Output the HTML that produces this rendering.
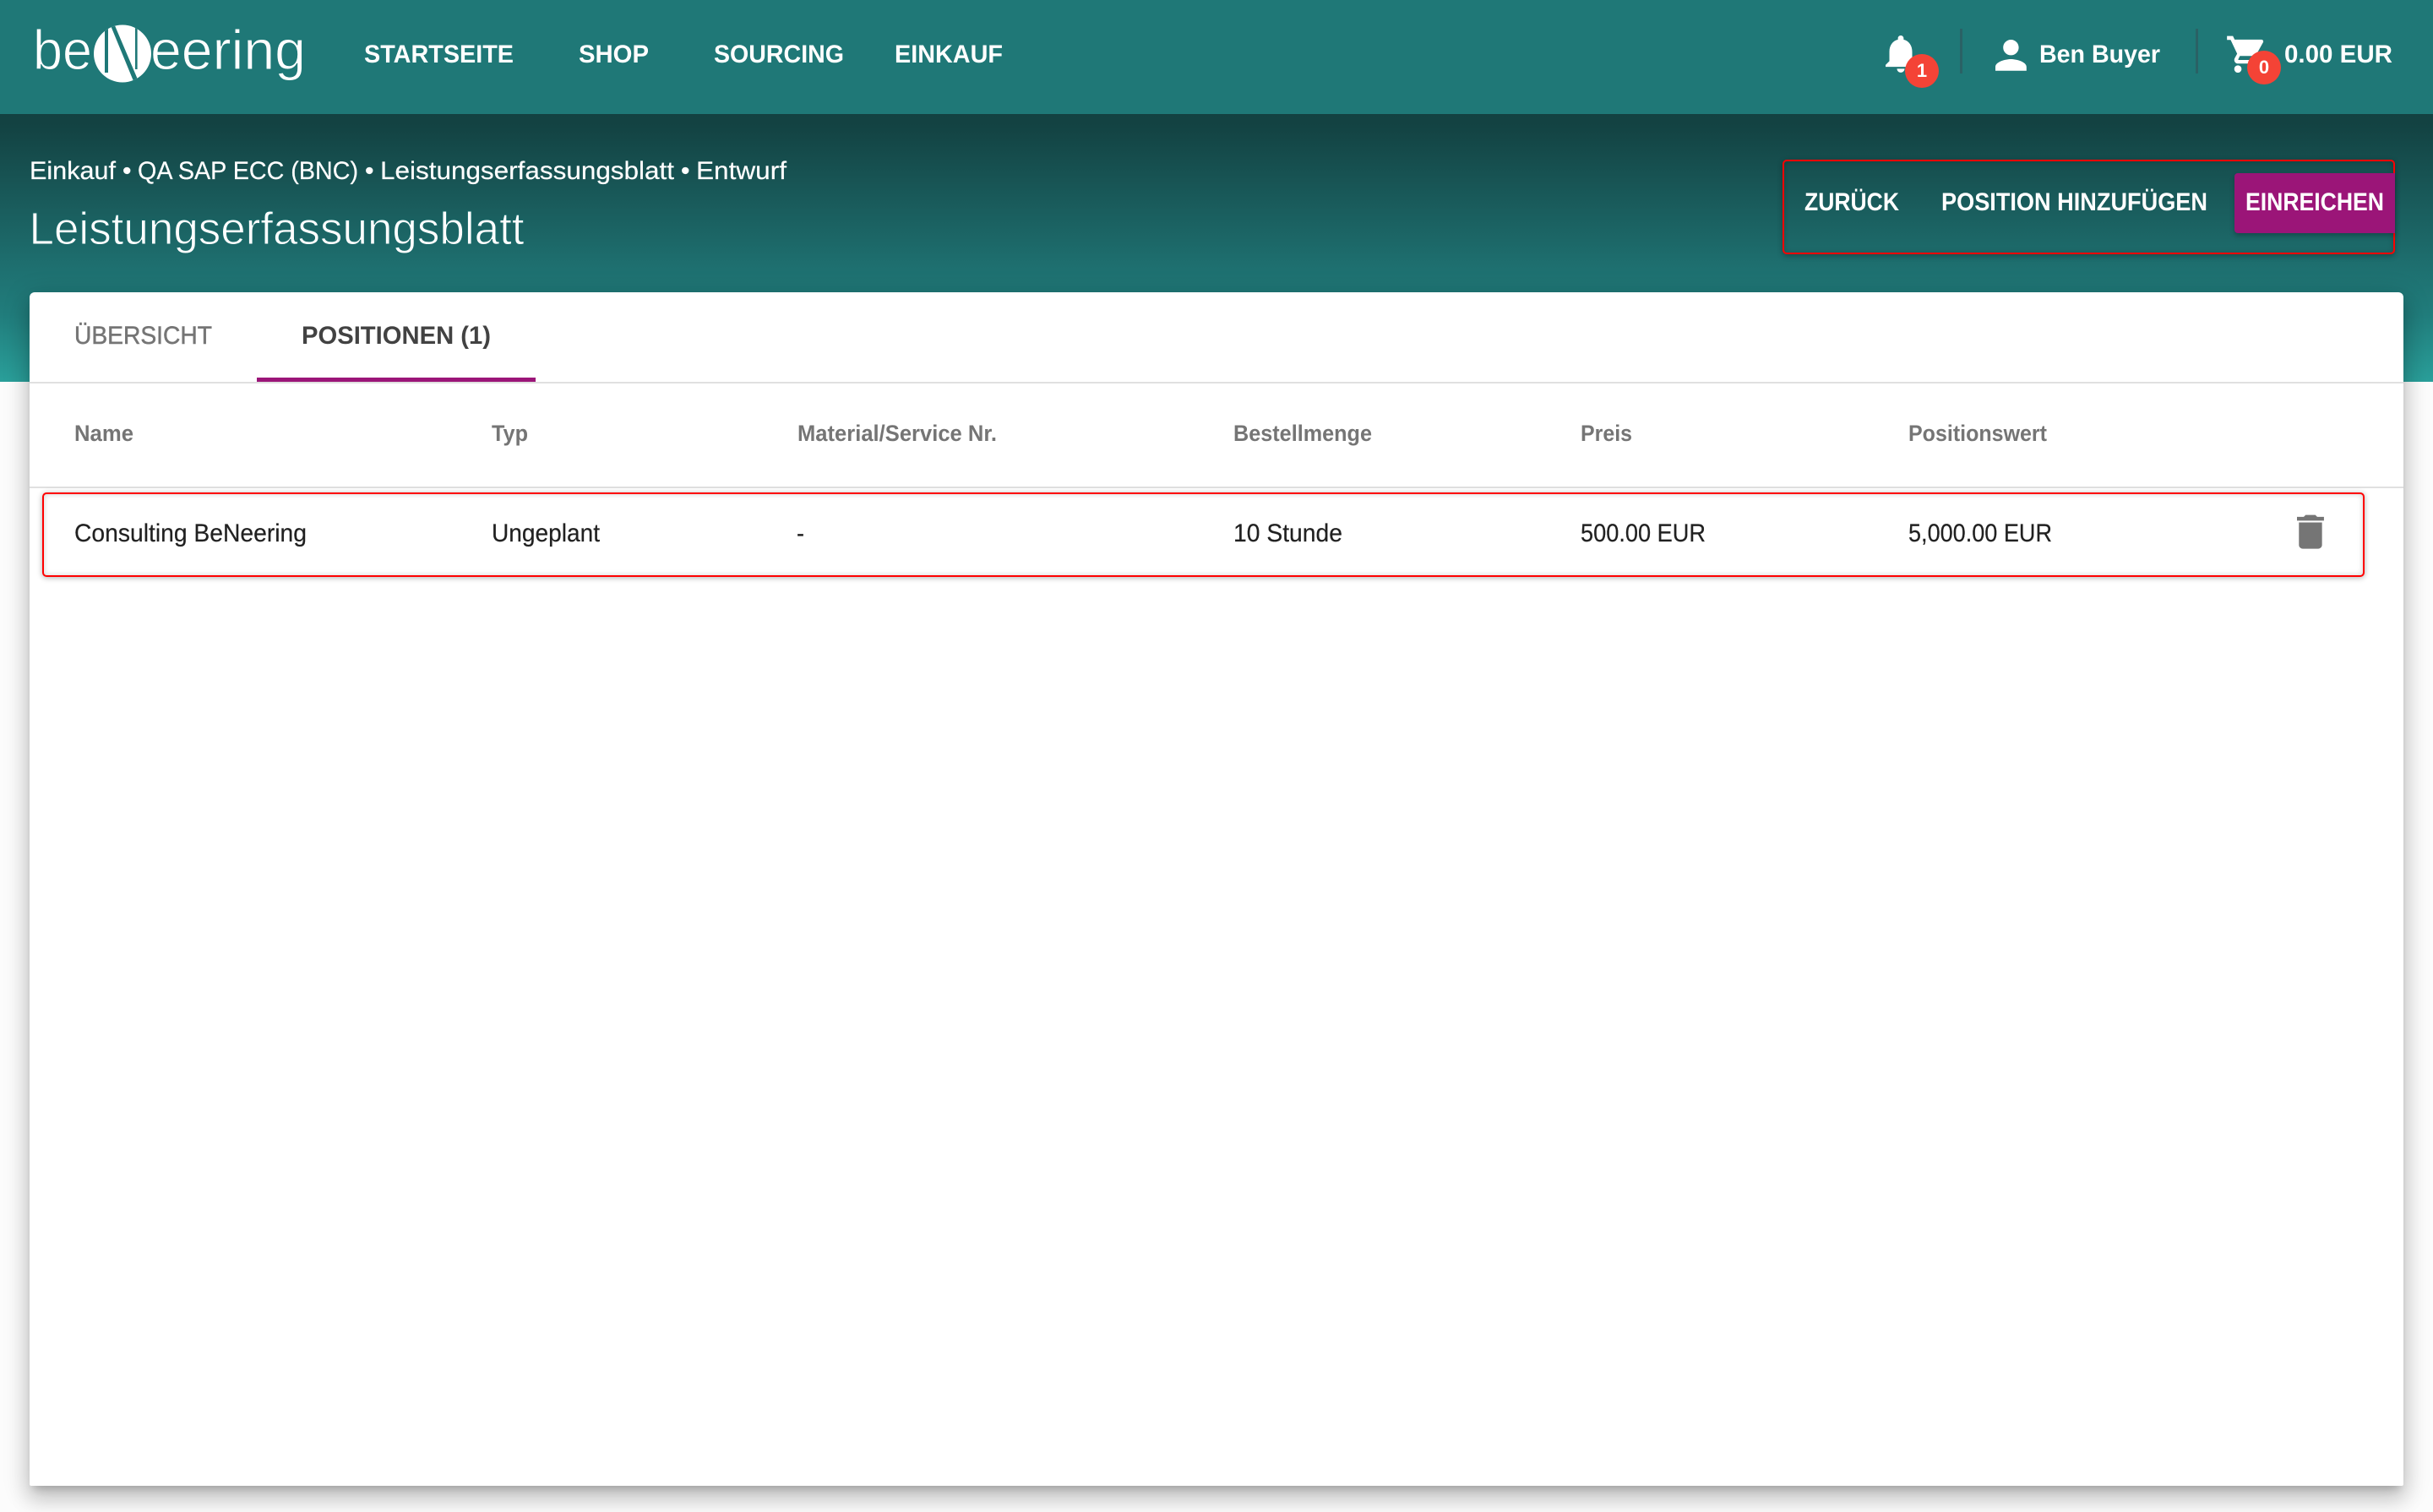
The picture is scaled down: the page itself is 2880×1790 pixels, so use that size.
<!DOCTYPE html>
<html lang="de">
<head>
<meta charset="utf-8">
<title>Leistungserfassungsblatt</title>
<style>
html,body{margin:0;padding:0;width:2880px;height:1790px;overflow:hidden;background:#fcfcfc}
body{position:relative;font-family:"Liberation Sans",sans-serif}
.abs{position:absolute}
#nav{left:0;top:0;width:2880px;height:135px;background:#1f7877}
#hero{left:0;top:135px;width:2880px;height:317px;background:linear-gradient(180deg,#134141 0%,#134343 5%,#185656 27%,#1e7070 58%,#217d7c 75%,#2a9f9a 100%)}
#card{left:35px;top:346px;width:2810px;height:1413px;background:#fff;border-radius:6px 6px 2px 2px;box-shadow:0 8px 10px -5px rgba(0,0,0,.2),0 16px 24px 2px rgba(0,0,0,.14),0 6px 30px 5px rgba(0,0,0,.12)}
#tabline{left:35px;top:452px;width:2810px;height:2px;background:#e0e0e0}
#tabsel{left:304px;top:447px;width:330px;height:5px;background:#9b1578}
#headline{left:35px;top:576px;width:2810px;height:2px;background:#e0e0e0}
#rowbox{left:50px;top:583px;width:2745px;height:96px;border:2px solid #f00;border-radius:5px;box-shadow:0 1px 7px rgba(0,0,0,.32),inset 0 0 7px rgba(0,0,0,.18)}
#btnbox{left:2110px;top:189px;width:721px;height:108px;border:2px solid #f00;border-radius:5px;box-shadow:0 2px 7px rgba(0,0,0,.3),inset 0 0 7px rgba(0,0,0,.18)}
#submit{left:2645px;top:205px;width:190px;height:71px;background:#9b1578;border-radius:4px 0 0 4px;box-shadow:0 3px 6px rgba(0,0,0,.25)}
svg{position:absolute;left:0;top:0}
text{font-family:"Liberation Sans",sans-serif}
.w{fill:#fff}
.m{font-weight:bold}
.nav{font-size:30px}
.crumb{font-size:30px;fill:#fff;stroke:#fff;stroke-width:.2px}
.thead{font-size:27px;fill:#757575;font-weight:bold}
.cell{font-size:30px;fill:#212121;stroke:#212121;stroke-width:.2px}
</style>
</head>
<body>
<div class="abs" id="nav"></div>
<div class="abs" id="hero"></div>
<div class="abs" id="card"></div>
<div class="abs" id="tabline"></div>
<div class="abs" id="tabsel"></div>
<div class="abs" id="headline"></div>
<div class="abs" id="rowbox"></div>
<div class="abs" id="btnbox"></div>
<div class="abs" id="submit"></div>

<svg width="2880" height="1790" viewBox="0 0 2880 1790" xmlns="http://www.w3.org/2000/svg">
  <defs>
    <clipPath id="nclip"><circle cx="145" cy="63.5" r="34"/></clipPath>
  </defs>

  <!-- Logo -->
  <text x="39" y="82" font-size="66" fill="#fff" stroke="#1f7877" stroke-width="1" textLength="70" lengthAdjust="spacingAndGlyphs">be</text>
  <circle cx="145" cy="63.5" r="34" fill="#fff"/>
  <g clip-path="url(#nclip)" fill="#1f7877">
    <rect x="124" y="28" width="4" height="58"/>
    <polygon points="130,28 135,28 163,94 158,96"/>
    <rect x="160" y="30" width="2.6" height="52"/>
  </g>
  <text x="178" y="82" font-size="66" fill="#fff" stroke="#1f7877" stroke-width="1" textLength="184" lengthAdjust="spacingAndGlyphs">eering</text>

  <!-- Nav -->
  <text class="w m nav" x="431" y="74" textLength="177" lengthAdjust="spacingAndGlyphs">STARTSEITE</text>
  <text class="w m nav" x="685" y="74" textLength="83" lengthAdjust="spacingAndGlyphs">SHOP</text>
  <text class="w m nav" x="845" y="74" textLength="154" lengthAdjust="spacingAndGlyphs">SOURCING</text>
  <text class="w m nav" x="1059" y="74" textLength="128" lengthAdjust="spacingAndGlyphs">EINKAUF</text>

  <!-- Bell -->
  <path transform="translate(2223 36.4) scale(2.25)" fill="#fff" d="M12 22c1.1 0 2-.9 2-2h-4c0 1.1.89 2 2 2zm6-6v-5c0-3.07-1.64-5.64-4.5-6.32V4c0-.83-.67-1.5-1.5-1.5s-1.5.67-1.5 1.5v.68C7.63 5.36 6 7.92 6 11v5l-2 2v1h16v-1l-2-2z"/>
  <circle cx="2275" cy="84" r="20" fill="#f44336"/>
  <text x="2275" y="91" font-size="22" fill="#fff" font-weight="bold" text-anchor="middle">1</text>
  <rect x="2320" y="34" width="3" height="53" fill="#2a6165"/>

  <!-- User -->
  <path transform="translate(2352.8 37.8) scale(2.3)" fill="#fff" d="M12 12c2.21 0 4-1.79 4-4s-1.79-4-4-4-4 1.79-4 4 1.79 4 4 4zm0 2c-2.67 0-8 1.34-8 4v2h16v-2c0-2.66-5.33-4-8-4z"/>
  <text class="w m nav" x="2414" y="74" textLength="143" lengthAdjust="spacingAndGlyphs">Ben Buyer</text>
  <rect x="2599" y="34" width="3" height="53" fill="#2a6165"/>

  <!-- Cart -->
  <path transform="translate(2634 38.7) scale(2.15)" fill="#fff" d="M7 18c-1.1 0-1.99.9-1.99 2S5.9 22 7 22s2-.9 2-2-.9-2-2-2zM1 2v2h2l3.6 7.59-1.35 2.45c-.16.28-.25.61-.25.96 0 1.1.9 2 2 2h12v-2H7.42c-.14 0-.25-.11-.25-.25l.03-.12.9-1.83h7.45c.75 0 1.41-.41 1.75-1.03l3.58-6.47c.08-.14.12-.31.12-.48 0-.55-.45-1-1-1H5.21l-.94-2H1zm16 16c-1.1 0-1.99.9-1.99 2s.89 2 2 2 2-.9 2-2-.9-2-2-2z"/>
  <circle cx="2680" cy="80" r="20" fill="#f44336"/>
  <text x="2680" y="87" font-size="22" fill="#fff" font-weight="bold" text-anchor="middle">0</text>
  <text class="w m nav" x="2704" y="74" textLength="128" lengthAdjust="spacingAndGlyphs">0.00 EUR</text>

  <!-- Hero breadcrumb -->
  <text class="crumb" x="35" y="212" textLength="102" lengthAdjust="spacingAndGlyphs">Einkauf</text>
  <text class="crumb" x="145" y="212">•</text>
  <text class="crumb" x="163" y="212" textLength="261" lengthAdjust="spacingAndGlyphs">QA SAP ECC (BNC)</text>
  <text class="crumb" x="432" y="212">•</text>
  <text class="crumb" x="450" y="212" textLength="348" lengthAdjust="spacingAndGlyphs">Leistungserfassungsblatt</text>
  <text class="crumb" x="806" y="212">•</text>
  <text class="crumb" x="824" y="212" textLength="107" lengthAdjust="spacingAndGlyphs">Entwurf</text>

  <text class="w" x="34.5" y="289" font-size="54" stroke="#1c6a6a" stroke-width="1" textLength="586" lengthAdjust="spacingAndGlyphs">Leistungserfassungsblatt</text>

  <!-- Action buttons -->
  <text class="w m nav" x="2136" y="249" textLength="112" lengthAdjust="spacingAndGlyphs">ZURÜCK</text>
  <text class="w m nav" x="2298" y="249" textLength="315" lengthAdjust="spacingAndGlyphs">POSITION HINZUFÜGEN</text>
  <text class="w m nav" x="2658" y="249" textLength="164" lengthAdjust="spacingAndGlyphs">EINREICHEN</text>

  <!-- Tabs -->
  <text x="88" y="407" font-size="30" fill="#757575" stroke="#757575" stroke-width=".5" textLength="163" lengthAdjust="spacingAndGlyphs">ÜBERSICHT</text>
  <text x="357" y="407" font-size="30" fill="#424242" font-weight="bold" textLength="224" lengthAdjust="spacingAndGlyphs">POSITIONEN (1)</text>

  <!-- Table head -->
  <text class="thead" x="88" y="522" textLength="70" lengthAdjust="spacingAndGlyphs">Name</text>
  <text class="thead" x="582" y="522" textLength="43" lengthAdjust="spacingAndGlyphs">Typ</text>
  <text class="thead" x="944" y="522" textLength="236" lengthAdjust="spacingAndGlyphs">Material/Service Nr.</text>
  <text class="thead" x="1460" y="522" textLength="164" lengthAdjust="spacingAndGlyphs">Bestellmenge</text>
  <text class="thead" x="1871" y="522" textLength="61" lengthAdjust="spacingAndGlyphs">Preis</text>
  <text class="thead" x="2259" y="522" textLength="164" lengthAdjust="spacingAndGlyphs">Positionswert</text>

  <!-- Row -->
  <text class="cell" x="88" y="641" textLength="275" lengthAdjust="spacingAndGlyphs">Consulting BeNeering</text>
  <text class="cell" x="582" y="641" textLength="128" lengthAdjust="spacingAndGlyphs">Ungeplant</text>
  <text class="cell" x="943" y="641" textLength="9" lengthAdjust="spacingAndGlyphs">-</text>
  <text class="cell" x="1460" y="641" textLength="129" lengthAdjust="spacingAndGlyphs">10 Stunde</text>
  <text class="cell" x="1871" y="641" textLength="148" lengthAdjust="spacingAndGlyphs">500.00 EUR</text>
  <text class="cell" x="2259" y="641" textLength="170" lengthAdjust="spacingAndGlyphs">5,000.00 EUR</text>

  <!-- Trash -->
  <path transform="translate(2707.6 603) scale(2.28 2.22)" fill="#757575" d="M6 19c0 1.1.9 2 2 2h8c1.1 0 2-.9 2-2V7H6v12zM19 4h-3.5l-1-1h-5l-1 1H5v2h14V4z"/>
</svg>
</body>
</html>
